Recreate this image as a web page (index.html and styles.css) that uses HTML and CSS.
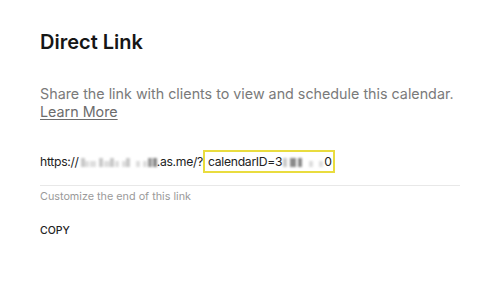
FILE: index.html
```html
<!DOCTYPE html>
<html>
<head>
<meta charset="utf-8">
<link rel="stylesheet" href="styles.css">
</head>
<body>
<main class="panel">
  <h1 class="title">Direct Link</h1>
  <p class="desc">Share the link with clients to view and schedule this calendar. <a class="learn" href="#">Learn More</a></p>
  <div class="field">
    <div class="url">
      <span>https://</span>
      <span class="redact r1" aria-hidden="true"><i class="s t"></i><i class="s x"></i><i class="s x w"></i><i class="gap"></i><i class="s t"></i><i class="s x w"></i><i class="s t"></i><i class="s x"></i><i class="gap"></i><i class="s x"></i><i class="s t"></i><i class="gap"></i><i class="gap"></i><i class="s x"></i><i class="gap"></i><i class="s x"></i><i class="s t d"></i><i class="s t k"></i></span>
      <span>.as.me/?</span>
      <span class="hl">calendarID=3<span class="redact r3" aria-hidden="true"><i class="s t"></i><i class="s t k w"></i><i class="s t k"></i><i class="gap"></i><i class="s x"></i><i class="gap"></i><i class="s x"></i></span>0</span>
    </div>
  </div>
  <p class="hint">Customize the end of this link</p>
  <button class="copy" type="button">COPY</button>
</main>
</body>
</html>
```

FILE: styles.css
```css
* { box-sizing: border-box; }
html, body { margin: 0; background: #fff; }
body { font-family: Inter, "Noto Sans", sans-serif; color: #1a1a1a; }
.panel { padding: 30px 35px 0 40px; display: flex; flex-direction: column; align-items: flex-start; }
.title { margin: 0; font-size: 20px; line-height: 24px; font-weight: 600; color: #161616; }
.desc { margin: 31px 0 0; font-size: 14.3px; line-height: 18px; color: #7a7a7a; max-width: 425px; }
.learn { color: #6c6c6c; text-decoration: underline; text-underline-offset: 2px; }
.field { margin-top: 29px; align-self: stretch; border-bottom: 1px solid #e8e8e8; padding-bottom: 12px; }
.url { font-size: 12.2px; letter-spacing: -0.3px; line-height: 15px; height: 23px; color: #222; display: flex; align-items: center; white-space: nowrap; }
.redact { display: inline-flex; align-items: flex-end; justify-content: space-between; height: 10px; filter: blur(0.8px); }
.r1 { width: 76px; margin-left: 2px; }
.r3 { width: 40px; margin: 0 1px; }
.redact i { display: block; }
.redact .s { width: 4px; background: #c9c9c9; }
.redact .x { height: 6px; background: #dedede; }
.redact .t { height: 9px; }
.redact .w { width: 6px; }
.redact .d { background: #9a9a9a; }
.redact .k { background: #8a8a8a; }
.redact .gap { width: 2px; height: 1px; }
.hl { border: 2px solid #e9dc3f; padding: 2px 1px 2px 3px; display: inline-flex; align-items: center; }
.hint { margin: 4px 0 0; font-size: 10.8px; line-height: 14px; color: #9a9a9a; }
.copy { margin-top: 20px; padding: 0; border: 0; background: none; font-family: inherit; font-size: 10.5px; line-height: 13px; font-weight: 500; letter-spacing: 0; color: #222; }
```
